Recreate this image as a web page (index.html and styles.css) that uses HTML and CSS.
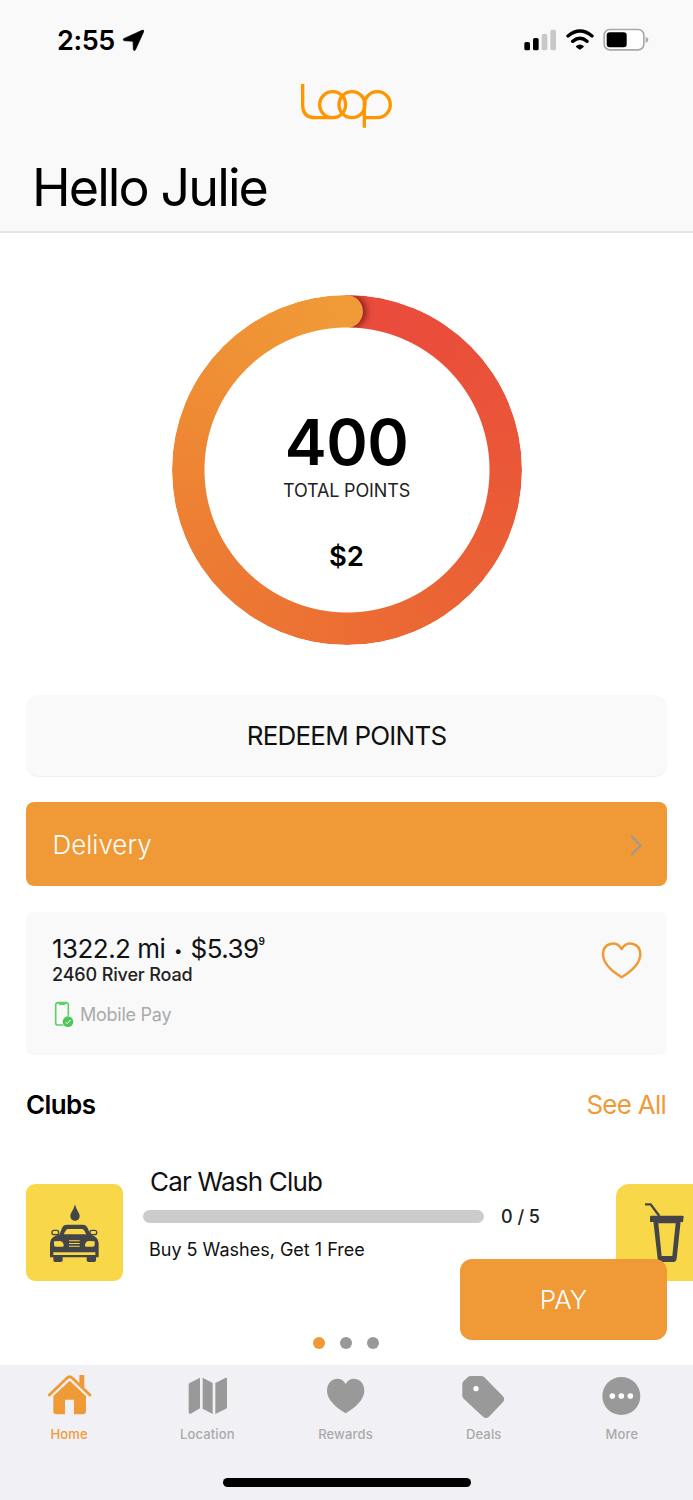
FILE: index.html
```html
<!DOCTYPE html>
<html lang="en">
<head>
<meta charset="utf-8">
<title>Loop</title>
<link rel="stylesheet" href="styles.css">
</head>
<body>
<div class="app">
  <header class="header">
    <div class="status">
      <span class="time">2:55</span>
      <svg class="locate" viewBox="366 86 68 68"><path d="M430 90Q433 89 431 94L406 149Q402 153 400 148L399 123L373 121Q367 119 371 115L426 90Z" stroke="#000" stroke-width="2"/></svg>
      <svg class="signals" viewBox="730 80 380 80">
        <rect x="734" y="125" width="17" height="25" rx="5"/>
        <rect x="760" y="113" width="17" height="37" rx="5"/>
        <rect x="786" y="101" width="17" height="49" rx="5" fill="#c8c8c8"/>
        <rect x="812" y="88" width="17" height="62" rx="5" fill="#c8c8c8"/>
        <path d="M865 107Q901 77 937 107M879 123Q901 105 922 123" fill="none" stroke="#000" stroke-width="10" stroke-linecap="round"/>
        <path d="M889 137Q901 128 912 137Q913 139 911 141L903 147Q900 149 898 147L890 141Q888 139 889 137Z"/>
        <rect x="973.500" y="87.500" width="119" height="61" rx="17" fill="#fff" stroke="#a9a9a9" stroke-width="5"/>
        <rect x="981" y="96" width="60" height="45" rx="9"/>
        <path d="M1098 109Q1106 112 1106 118Q1106 124 1098 128Z" fill="#a9a9a9"/>
      </svg>
    </div>
    <svg class="logo" viewBox="60 248 280 138" role="img" aria-label="Loop">
      <g fill="none" stroke="#ff9500" stroke-width="10">
        <path d="M68 251V315Q69 352 106 352H158"/>
        <circle cx="158" cy="313" r="39"/>
        <circle cx="216" cy="313" r="39"/>
        <path d="M253 382V313A39 39 0 1 1 292 352H253"/>
      </g>
    </svg>
    <h1 class="hello">Hello Julie</h1>
  </header>

  <main class="content">
    <section class="gauge">
      <div class="ring"><div class="ring-cap"></div></div>
      <div class="gauge-text">
        <span class="points">400</span>
        <span class="points-label">TOTAL POINTS</span>
        <span class="cash">$2</span>
      </div>
    </section>

    <button class="redeem"><span>REDEEM POINTS</span></button>

    <a class="delivery">
      <span>Delivery</span>
      <svg class="chevron" viewBox="0 0 12 21"><path d="M1.200 1L10.600 10.500L1.200 20" fill="none" stroke="#999" stroke-width="1.900"/></svg>
    </a>

    <section class="station">
      <div class="station-info">
        <div class="price"><span class="price-main">1322.2 mi <span class="bullet">•</span> $5.39</span><span class="ninth">9</span></div>
        <div class="address">2460 River Road</div>
        <div class="mobile">
          <svg class="phone" viewBox="162 304 60 80">
            <path d="M190 376H174Q167 376 167 369V317Q167 309 174 309H198Q205 309 205 317V348" fill="none" stroke="#5fd068" stroke-width="5"/>
            <path d="M174 309H199L195 316H178Z" fill="#5fd068"/>
            <circle cx="204" cy="366" r="16" fill="#4fc75a"/>
            <path d="M197 367L202 372L211 361" fill="none" stroke="#fff" stroke-width="3"/>
          </svg>
          <span class="mobile-label">Mobile Pay</span>
        </div>
      </div>
      <svg class="heart" viewBox="774 783 124 115"><path d="M836 892C808 875 780 849 780 823C780 790 819 779 836 807C853 779 892 790 892 823C892 849 864 875 836 892Z" fill="none" stroke="#f09a37" stroke-width="7.500" stroke-linejoin="round"/></svg>
    </section>

    <div class="section-head">
      <h2 class="clubs">Clubs</h2>
      <a class="see-all">See All</a>
    </div>

    <section class="carousel">
      <div class="tile">
        <svg viewBox="79 102 291 291" fill="#444548">
          <path d="M226 163C230 181 240 189 240 199A14 13 0 0 1 212 199C212 189 222 181 226 163Z"/>
          <path fill-rule="evenodd" d="M180 253L187 234Q191 224 202 224H249Q260 224 264 234L272 253Q297 262 297 280V322H289V331Q289 336 284 336H266Q261 336 261 331V322H189V331Q189 336 184 336H166Q161 336 161 331V322H151V280Q151 261 180 253ZM192 253H260L254 242Q252 237 247 237H205Q200 237 198 242ZM163 274V284Q163 290 169 290H188Q194 290 192 284Q190 274 180 273ZM285 274V284Q285 290 279 290H260Q254 290 256 284Q258 274 268 273ZM208 271V274H240V271ZM208 279V282H240V279ZM208 287V290H240V287ZM161 307V315H287V307Z"/>
          <path d="M169 278Q181 276 187 285H169ZM279 278Q267 276 261 285H279Z" fill="#f8d749"/>
          <g fill="none" stroke="#444548" stroke-width="4"><rect x="157" y="241" width="20" height="13" rx="6"/><rect x="271" y="241" width="20" height="13" rx="6"/></g>
        </svg>
      </div>
      <div class="club">
        <div class="club-name"><span>Car Wash Club</span></div>
        <div class="progress"><div class="track"></div><span class="count">0 / 5</span></div>
        <div class="club-desc"><span>Buy 5 Washes, Get 1 Free</span></div>
      </div>
      <div class="tile tile-next">
        <svg viewBox="820 102 291 291" fill="none" stroke="#444548">
          <path d="M907 163H924L950 198" stroke-width="7"/>
          <path d="M925 197H1020Q1023 197 1023 201L1021 216H922V201Q922 197 925 197Z" fill="#444548" stroke="none"/>
          <path fill-rule="evenodd" d="M932 214H1014L1002 326Q1000 336 990 336H957Q947 336 945 326ZM947 220L957 318H989L999 220Z" fill="#444548" stroke="none"/>
        </svg>
      </div>
    </section>
    <div class="dots"><i class="dot active"></i><i class="dot"></i><i class="dot"></i></div>
    <button class="pay"><span>PAY</span></button>
  </main>

  <footer class="tabbar">
    <nav class="tabs">
      <a class="tab selected">
        <svg viewBox="138 50 141 141"><g fill="#f09a37"><path d="M148 119L201 68Q209 61 217 68L270 119" fill="none" stroke="#f09a37" stroke-width="8.500" stroke-linecap="round"/><path d="M238 61Q238 59 240 59H251Q253 59 253 61V98L238 84ZM160 122L209 76L258 122V167Q258 177 248 177H222V133H195V177H170Q160 177 160 167Z"/></g></svg>
        <span>Home</span>
      </a>
      <a class="tab">
        <svg viewBox="552 50 141 141"><path fill="#999" d="M566 88Q566 84 570 82L600 67V159L572 175Q566 177 566 170ZM608 67L638 83V176L608 160ZM646 83L676 68Q681 66 681 71V155Q681 159 677 161L646 176Z"/></svg>
        <span>Location</span>
      </a>
      <a class="tab">
        <svg viewBox="967 50 141 141"><path fill="#999" d="M1038 174C1008 156 982 132 982 106C982 69 1024 58 1038 86C1052 58 1094 69 1094 106C1094 132 1068 156 1038 174Z"/></svg>
        <span>Rewards</span>
      </a>
      <a class="tab">
        <svg viewBox="352 50 141 141"><path fill="#999" d="M383 62H416Q421 62 425 66L481 123Q488 132 481 140L439 184Q431 192 422 185L363 130Q359 126 359 121V86Q359 81 363 77L376 65Q379 62 383 62Z"/><circle cx="400" cy="100" r="8" fill="#fff"/></svg>
        <span>Deals</span>
      </a>
      <a class="tab">
        <svg viewBox="768 50 141 141"><circle cx="838" cy="122" r="57" fill="#999"/><g fill="#fff"><circle cx="811" cy="122" r="8.500"/><circle cx="838" cy="122" r="8.500"/><circle cx="865" cy="122" r="8.500"/></g></svg>
        <span>More</span>
      </a>
    </nav>
    <div class="home-indicator"></div>
  </footer>
</div>
</body>
</html>
```

FILE: styles.css
```css
* { box-sizing: border-box; }
body { margin: 0; background: #fff; color: #000; font-family: Inter, "Liberation Sans", sans-serif; }
h1, h2 { margin: 0; font-weight: 400; }
button { border: 0; padding: 0; font: inherit; }
svg { display: block; flex: none; }
span { white-space: nowrap; }

.app { width: 693px; height: 1500px; overflow: hidden; display: flex; flex-direction: column; }

.header { height: 233px; background: #f9f9f9; border-bottom: 2px solid #e4e4e4; flex: none; }
.status { height: 80px; padding: 0 43px 0 57px; display: flex; align-items: center; }
.time { font-size: 27px; font-weight: 600; letter-spacing: -0.4px; }
.locate { width: 22.700px; height: 22.700px; margin-left: 7px; }
.signals { width: 126.700px; height: 26.700px; margin-left: auto; }
.logo { width: 93.300px; height: 46px; margin: 2.700px 0 0 300px; }
.hello { font-size: 52px; line-height: 60px; margin: 29.500px 0 0 32px; letter-spacing: -1.9px; }

.content { position: relative; height: 1132px; flex: none; padding: 62px 26px 0; }
.gauge { width: 350px; height: 350px; margin: 0 0 0 145.500px; display: grid; }
.ring, .gauge-text { grid-area: 1 / 1; }
.ring {
  position: relative;
  border-radius: 50%;
  background: conic-gradient(#ea4b3d, #ea4f3a 12%, #ea5837 25%, #eb6634 42%, #ec7033 52%, #ed7f33 70%, #ef9035 86%, #f09b37);
  -webkit-mask: radial-gradient(circle closest-side, transparent 142px, #000 143px);
  mask: radial-gradient(circle closest-side, transparent 142px, #000 143px);
}
.ring-cap {
  position: absolute; left: 158.500px; top: 0; width: 33px; height: 33px;
  border-radius: 50%; background: #f09b37;
  box-shadow: 3px 0 7px rgba(70, 0, 0, .65);
  clip-path: inset(-10px -20px -10px 50%);
}
.gauge-text { display: flex; flex-direction: column; align-items: center; padding-top: 107px; }
.points { font-size: 63px; line-height: 80px; font-weight: 600; letter-spacing: -0.6px; }
.points-label { font-size: 18px; line-height: 24px; margin-top: -3px; color: #222; letter-spacing: -0.15px; }
.cash { font-size: 27.500px; line-height: 36px; font-weight: 600; margin-top: 35px; }

.redeem {
  width: 641px; height: 81px; margin-top: 50px; display: flex; align-items: center; justify-content: center;
  background: #f9f9f9; color: #111; border-radius: 13px; font-size: 26px; letter-spacing: -0.78px;
  box-shadow: 0 1px 1px rgba(0, 0, 0, .07);
}
.delivery {
  width: 641px; height: 84px; margin-top: 26px; padding: 0 25px 0 26.500px; display: flex; align-items: center; justify-content: space-between;
  background: #f09a37; color: #fff; border-radius: 8px; font-size: 26px; font-weight: 300;
}
.chevron { width: 12px; height: 21px; margin-top: 3px; }
.station { width: 641px; height: 143px; margin-top: 26px; padding: 21px 25px 0 26px; display: flex; justify-content: space-between; background: #f9f9f9; border-radius: 7px; }
.price { display: flex; font-size: 26px; line-height: 32px; color: #111; letter-spacing: -0.55px; }
.bullet { display: inline-block; font-size: 15px; line-height: 0; vertical-align: 2.500px; margin: 0 2px; }
.ninth { font-size: 10px; line-height: 16px; font-weight: 600; }
.address { font-size: 18px; line-height: 20px; font-weight: 500; color: #222; letter-spacing: -0.15px; }
.mobile { display: flex; align-items: center; height: 27px; margin-top: 16px; gap: 6px; }
.phone { width: 20px; height: 26.700px; margin-left: 2px; }
.mobile-label { font-size: 18px; color: #aaa; letter-spacing: -0.25px; }
.heart { width: 41.300px; height: 38.300px; margin-top: 8px; }

.section-head { width: 641px; height: 40px; margin-top: 29px; display: flex; justify-content: space-between; align-items: center; }
.clubs { font-size: 26px; font-weight: 600; letter-spacing: -0.6px; }
.see-all { font-size: 26px; color: #f09a37; letter-spacing: -0.75px; margin-right: 1px; }

.carousel { display: flex; width: 700px; margin-top: 41px; height: 116px; }
.tile { width: 97px; height: 97px; margin-top: 19px; border-radius: 9px; background: #f8d749; flex: none; }
.tile svg { width: 97px; height: 97px; }
.tile-next { border-radius: 13px; margin-left: auto; margin-right: 13px; }
.club { margin-left: 20px; width: 400px; padding-top: 1px; }
.club-name { font-size: 26px; line-height: 32px; padding-left: 7px; color: #111; letter-spacing: -0.8px; }
.progress { display: flex; align-items: center; height: 26px; margin-top: 5px; }
.track { width: 341px; height: 13px; border-radius: 7px; background: #ccc; }
.count { font-size: 18px; font-weight: 500; margin-left: 17px; color: #222; }
.club-desc { font-size: 18px; line-height: 24px; margin-top: 9px; padding-left: 6px; color: #111; }
.dots { display: flex; justify-content: center; gap: 15px; margin: 55.500px 1px 0 0; }
.dot { width: 12px; height: 12px; border-radius: 50%; background: #999; }
.dot.active { background: #f09a37; }
.pay {
  position: absolute; left: 460px; top: 1025.500px; width: 207px; height: 81px;
  display: flex; align-items: center; justify-content: center;
  border-radius: 12px; background: #f09a37; color: #fff; font-size: 26px; font-weight: 300;
}

.tabbar { height: 135px; background: #f0f0f5; flex: none; display: flex; flex-direction: column; align-items: center; }
.tabs { align-self: flex-start; width: 691px; height: 113px; display: grid; grid-template-columns: repeat(5, 1fr); }
.tab { display: flex; flex-direction: column; align-items: center; padding-top: 6.700px; color: #aaa; font-size: 13px; font-weight: 450; line-height: 16px; letter-spacing: .15px; }
.tab svg { width: 47px; height: 47px; margin-bottom: 7px; }
.tab.selected { color: #f09a37; }
.home-indicator { width: 248px; height: 9px; border-radius: 5px; background: #000; }
```
